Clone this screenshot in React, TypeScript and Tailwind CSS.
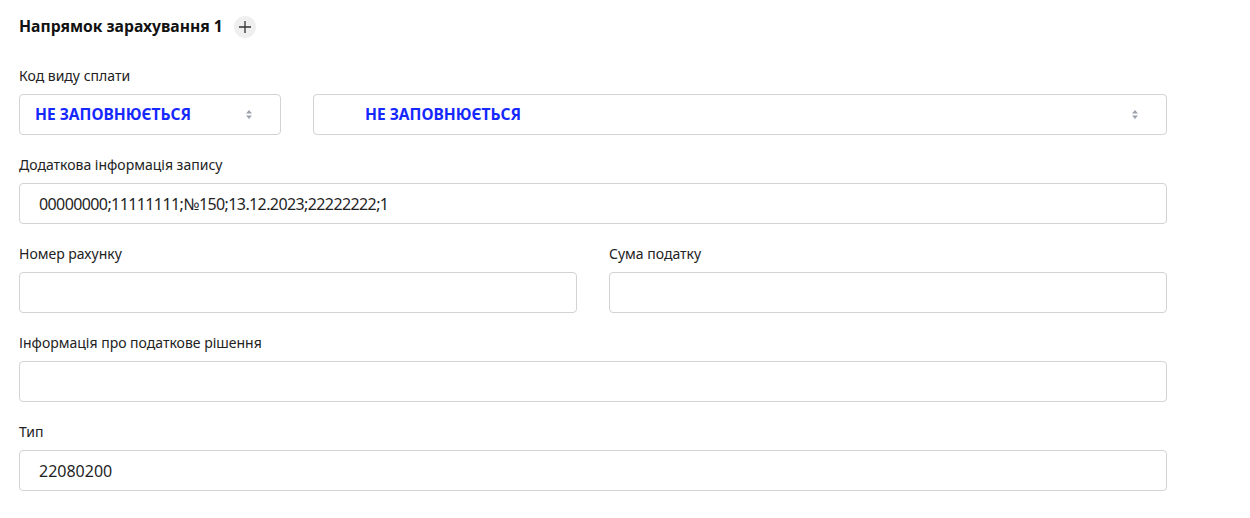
const font = { fontFamily: '"Noto Sans", "Open Sans", sans-serif' };

const Chevrons = () => (
  <svg width="8" height="11" viewBox="0 0 8 11" className="shrink-0">
    <path d="M4 1 L7 4.5 H1 Z" fill="#9aa3ad" />
    <path d="M4 10 L7 6.5 H1 Z" fill="#9aa3ad" />
  </svg>
);

const Label = ({ children }: { children: string }) => (
  <div className="h-5 text-[14px] leading-5 text-[#222]">{children}</div>
);

const Box = ({ value, className = '' }: { value?: string; className?: string }) => (
  <div
    className={`mt-2 h-[41px] flex items-center pl-[19px] border border-[#d3d3d3] rounded-[4px] bg-white text-[16px] text-[#1f1f1f] ${className}`}
  >
    {value}
  </div>
);

const Select = ({ className, pad }: { className: string; pad: string }) => (
  <div
    className={`h-[41px] flex items-center justify-between pr-[27px] border border-[#d3d3d3] rounded-[4px] bg-white ${pad} ${className}`}
  >
    <span className="text-[15.5px] font-bold text-[#1428ff]">НЕ ЗАПОВНЮЄТЬСЯ</span>
    <Chevrons />
  </div>
);

export default function App() {
  return (
    <div className="w-[1250px] h-[518px] bg-white overflow-hidden" style={font}>
      <div className="w-[1167px] pl-[19px] pt-[16px] flex flex-col">
        <div className="h-[22px] flex items-center gap-[11px]">
          <span className="text-[15.7px] font-bold text-[#111]">Напрямок зарахування 1</span>
          <div className="w-[22px] h-[22px] rounded-full bg-[#efefef] flex items-center justify-center">
            <svg width="14" height="14" viewBox="0 0 14 14">
              <path d="M7 1 V13 M1 7 H13" stroke="#333" strokeWidth="1.3" />
            </svg>
          </div>
        </div>

        <div className="mt-[28px] flex flex-col gap-5">
          <div>
            <Label>Код виду сплати</Label>
            <div className="mt-2 flex gap-8">
              <Select className="w-[262px]" pad="pl-[15px]" />
              <Select className="flex-1" pad="pl-[51px]" />
            </div>
          </div>

          <div>
            <Label>Додаткова інформація запису</Label>
            <Box value="00000000;11111111;№150;13.12.2023;22222222;1" className="tracking-[-0.6px]" />
          </div>

          <div className="grid grid-cols-2 gap-8">
            <div>
              <Label>Номер рахунку</Label>
              <Box />
            </div>
            <div>
              <Label>Сума податку</Label>
              <Box />
            </div>
          </div>

          <div>
            <Label>Інформація про податкове рішення</Label>
            <Box />
          </div>

          <div>
            <Label>Тип</Label>
            <Box value="22080200" />
          </div>
        </div>
      </div>
    </div>
  );
}
